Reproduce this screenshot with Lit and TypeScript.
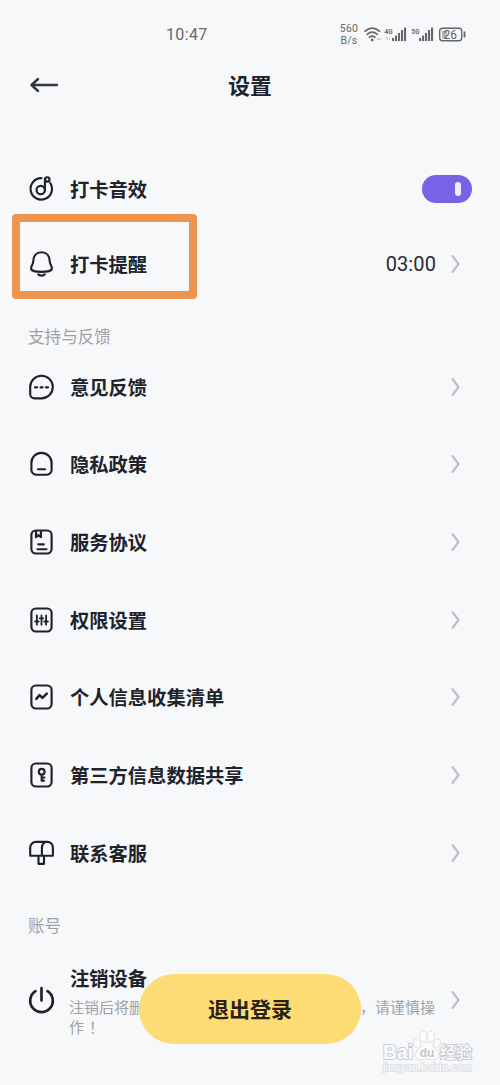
import { LitElement, html, css, svg, SVGTemplateResult } from "lit";
import { customElement, property, state } from "lit/decorators.js";

const icons: Record<string, SVGTemplateResult> = {
  music: svg`<path d="M14 3.2A10.7 10.7 0 1 0 22.7 8"/><circle cx="13.2" cy="15" r="4.2"/><path d="M17.4 15V3.8"/><circle cx="19.8" cy="4.4" r="2.2"/>`,
  bell: svg`<path d="M14 2.2C8.8 2.2 6.1 6 5.9 10.5C5.7 15 3.6 15.4 3.6 18.3C3.6 21.3 7.5 21.8 14 21.8S24.4 21.3 24.4 18.3C24.4 15.4 22.3 15 22.1 10.5C21.9 6 19.2 2.2 14 2.2Z"/><path d="M10.8 24.4Q14 26.9 17.2 24.4"/>`,
  feedback: svg`<path d="M14 2.7A11.3 11.3 0 1 1 14 25.3H7A4.3 4.3 0 0 1 2.7 21V14A11.3 11.3 0 0 1 14 2.7Z"/><path d="M7.5 14.3h2.1M13 14.3h2.1M18.5 14.3h2.1"/>`,
  privacy: svg`<path d="M3.9 13A10.1 10.1 0 0 1 24.1 13V20A4.7 4.7 0 0 1 19.4 24.7H8.6A4.7 4.7 0 0 1 3.9 20Z"/><path d="M10.5 19.2h7"/>`,
  agreement: svg`<rect x="3.9" y="2.5" width="20.2" height="23" rx="4.5"/><path d="M8.5 3v6.2l2.5-2 2.5 2V3M10.8 16.3h5.5M10 21.2h9"/>`,
  sliders: svg`<rect x="3.9" y="2.5" width="20.2" height="23" rx="4.5"/><path stroke-width="1.8" d="M9.4 9.3v9.4M14 9.3v9.4M18.6 9.3v9.4M7.6 15.5h3.6M12.2 12.3h3.6M16.8 15.5h3.6"/>`,
  chart: svg`<rect x="3.9" y="2.5" width="20.2" height="23" rx="4.5"/><path stroke-width="2.5" d="M8.8 15.8l3.3-3.6 2.8 2.7 4.4-4.2"/>`,
  key: svg`<rect x="3.9" y="2.5" width="20.2" height="23" rx="4.5"/><circle cx="14.2" cy="10.8" r="2.9"/><path d="M14.2 13.7v6M14.5 16.5h2.4M14.5 19.6h2"/>`,
  mailbox: svg`<path d="M8.5 2.8H19.8A5.6 5.6 0 0 1 25.4 8.5V16.7H2.7V8.5A5.8 5.8 0 0 1 8.5 2.8ZM14.4 16.5V8.3A5.5 5.5 0 0 1 19.8 2.8M11 17v7.8h5.5V17"/>`,
  power: svg`<path stroke-width="2.7" d="M8 5.2A11.3 11.3 0 1 0 20 5.2M14 2.2V14.5"/>`,
};

@customElement("settings-row")
class SettingsRow extends LitElement {
  @property() icon = "";
  @property() label = "";
  @property() value = "";
  @property({ type: Boolean }) toggle = false;
  @property({ type: Boolean }) marked = false;
  @state() private on = true;

  static styles = css`
    :host { display: flex; align-items: center; position: relative; padding: 0 39px 0 27px; height: 77.7px; box-sizing: border-box; }
    :host([compact]) { height: 75px; }
    :host([toggle]) { padding-right: 28px; }
    .icon { width: 29px; height: 28px; flex: none; fill: none; stroke: #20222b; stroke-width: 2.15; stroke-linecap: round; stroke-linejoin: round; }
    .body { flex: 1; margin-left: 14px; }
    .label { font-size: 19.3px; line-height: 28px; font-weight: 600; color: #20222c; white-space: nowrap; }
    .value { font: 20px/28px Roboto, sans-serif; color: #292b32; margin-right: 15px; letter-spacing: .1px; }
    .chevron { width: 10px; height: 20px; flex: none; fill: none; stroke: #bfc1c8; stroke-width: 2.3; stroke-linecap: round; stroke-linejoin: round; }
    .switch { width: 50px; height: 28px; padding: 0 11px; border: 0; border-radius: 14px; background: #7962e5; display: flex; align-items: center; justify-content: flex-end; box-sizing: border-box; }
    .switch.off { background: #c6c7ce; justify-content: flex-start; }
    .knob { width: 6px; height: 14px; border-radius: 3px; background: #f0edff; }
    .mark { position: absolute; left: 12px; top: -12px; width: 185px; height: 85px; border: 8px solid #ed944e; border-radius: 4px; box-sizing: border-box; pointer-events: none; }
  `;

  render() {
    return html`
      <svg class="icon" viewBox="0 0 28 28">${icons[this.icon]}</svg>
      <div class="body"><div class="label">${this.label}</div><slot></slot></div>
      ${this.value ? html`<span class="value">${this.value}</span>` : ""}
      ${this.toggle
        ? html`<button class=${this.on ? "switch" : "switch off"} @click=${() => (this.on = !this.on)}><span class="knob"></span></button>`
        : html`<svg class="chevron" viewBox="0 0 10 20"><path d="M1.7 2.2 7.5 10 1.7 17.8"/></svg>`}
      ${this.marked ? html`<div class="mark"></div>` : ""}
    `;
  }
}

@customElement("status-bar")
class StatusBar extends LitElement {
  static styles = css`
    :host { display: grid; grid-template-columns: 166px 1fr auto; align-items: center; height: 68px; padding-right: 33px; color: #66676b; font-family: Roboto, sans-serif; }
    .time { grid-column: 2; font-size: 16px; letter-spacing: .35px; }
    .right { display: flex; align-items: center; }
    .speed { font-size: 10.5px; line-height: 12px; text-align: center; width: 20px; letter-spacing: .2px; padding-top: 1px; }
    .signals { width: 108px; height: 22px; fill: none; stroke: #66676b; }
    .solid { fill: #66676b; stroke: none; }
    .faint { fill: #d5d6d8; stroke: none; }
    .gen { font-size: 8px; font-weight: 700; fill: #66676b; stroke: none; }
    .charge { font-size: 12px; fill: #5c5d61; stroke: none; }
  `;

  private bars(x: number) {
    return [3, 5.5, 8, 11, 13.5].map(
      (h, i) => svg`<rect class="solid" x=${x + i * 3} y=${18 - h} width="2.1" height=${h}/>`
    );
  }

  render() {
    return html`
      <span class="time">10:47</span>
      <div class="right">
        <div class="speed">560<br />B/s</div>
        <svg class="signals" viewBox="0 0 108 22">
          <g stroke-width="1.7" stroke-linecap="round">
            <path d="M6 8.2Q13.2 2 20.4 8.2M8.2 11.3Q13.2 7 18.2 11.3M10.4 14.3Q13.2 12 16 14.3"/>
          </g>
          <circle class="solid" cx="13.2" cy="17" r="1.4"/>
          <path class="faint" d="M18 15h4v2h-4zM27 14h2v3h-2zM30 14h1.5v3H30z"/>
          <text class="gen" x="25.5" y="10.6" textLength="8" lengthAdjust="spacingAndGlyphs">4G</text>
          ${this.bars(33)}
          <text class="gen" x="52.5" y="10.6" textLength="8" lengthAdjust="spacingAndGlyphs">5G</text>
          ${this.bars(60)}
          <rect x="80.7" y="5.3" width="22" height="12.4" rx="2.7" stroke-width="1.4"/>
          <rect x="83" y="7.5" width="5" height="8" fill="#b3b4b7" stroke="none"/>
          <text class="charge" x="84.6" y="15.8">26</text>
          <path d="M105.5 8.5v6" stroke-width="1.8"/>
        </svg>
      </div>
    `;
  }
}

@customElement("app-root")
class AppRoot extends LitElement {
  static styles = css`
    :host { display: block; position: relative; width: 500px; height: 1085px; overflow: hidden; background: #f7f8fa; font-family: "Noto Sans CJK SC", sans-serif; }
    .header { display: grid; grid-template-columns: 1fr auto 1fr; align-items: center; height: 33px; padding: 0 29px; }
    .back { width: 30px; height: 18px; fill: none; stroke: #353844; stroke-width: 2.4; stroke-linecap: round; stroke-linejoin: round; }
    .title { margin: -1px 0 0; font-size: 21.8px; line-height: 33px; font-weight: 700; color: #20222c; }
    .list { padding-top: 50px; }
    .section { box-sizing: border-box; height: 46.8px; padding: 25px 28px 0; font-size: 16.6px; line-height: 20px; color: #a0a1a6; }
    .section.account { height: 70px; padding-top: 23.6px; }
    .note { font-size: 15px; line-height: 20px; color: #a0a1a6; width: 366px; margin: 5px 0 0 -1px; }
    .line { display: flex; justify-content: space-between; }
    .bang { margin-left: 5px; }
    .logout { position: absolute; left: 139px; top: 974px; width: 222px; height: 70px; border: 0; padding: 0 0 2px; border-radius: 35px; background: #fddb75; color: #292116; font: 700 21px "Noto Sans CJK SC", sans-serif; }
    .watermark { position: absolute; left: 380px; top: 1028px; width: 96px; height: 50px; fill: #fcfcfd; stroke: #c9cbd0; stroke-width: 1; paint-order: stroke; }
    .brand { font: 700 21px "Liberation Sans", sans-serif; stroke-width: 2; }
    .cn { font: 500 16px "Noto Sans CJK SC", sans-serif; stroke-width: 2; }
    .du { font: 700 12px "Liberation Sans", sans-serif; fill: #c3c5ca; stroke: none; }
    .site { font: 11px "Liberation Sans", sans-serif; stroke: #dcdde1; stroke-width: 1.6; }
  `;

  render() {
    const support = [
      ["feedback", "意见反馈"],
      ["privacy", "隐私政策"],
      ["agreement", "服务协议"],
      ["sliders", "权限设置"],
      ["chart", "个人信息收集清单"],
      ["key", "第三方信息数据共享"],
      ["mailbox", "联系客服"],
    ];
    return html`
      <status-bar></status-bar>
      <header class="header">
        <svg class="back" viewBox="0 0 30 18"><path d="M28 9H2.5M9 3 2.5 9 9 15"/></svg>
        <h1 class="title">设置</h1>
      </header>
      <main class="list">
        <settings-row compact toggle icon="music" label="打卡音效"></settings-row>
        <settings-row compact marked icon="bell" label="打卡提醒" value="03:00"></settings-row>
        <div class="section">支持与反馈</div>
        ${support.map(([icon, label]) => html`<settings-row icon=${icon} label=${label}></settings-row>`)}
        <div class="section account">账号</div>
        <settings-row icon="power" label="注销设备">
          <div class="note">
            <div class="line"><span>注销后将删</span><span>，请谨慎操</span></div>
            <div>作<span class="bang">！</span></div>
          </div>
        </settings-row>
      </main>
      <button class="logout">退出登录</button>
      <svg class="watermark" viewBox="0 0 96 50">
        <text class="brand" x="3" y="31" textLength="30" lengthAdjust="spacingAndGlyphs">Bai</text>
        <ellipse cx="37" cy="15.5" rx="3.2" ry="4.2" transform="rotate(-20 37 15.5)"/>
        <ellipse cx="43.3" cy="8.5" rx="3.4" ry="4.7"/>
        <ellipse cx="51" cy="8.5" rx="3.4" ry="4.7"/>
        <ellipse cx="57" cy="15.5" rx="3.2" ry="4.2" transform="rotate(20 57 15.5)"/>
        <path d="M47 14.5C51 14.5 52 19 55.5 21.5C60 25 58.5 31.5 53.5 31.5C50 31.5 50 30.5 47 30.5S43 31.5 40 31.5C35.5 31.5 34.5 25 38.5 21.5C42 19 43 14.5 47 14.5Z"/>
        <text class="du" x="39.7" y="28.5">du</text>
        <text class="cn" x="60" y="30">经验</text>
        <text class="site" x="3" y="43" textLength="89">jingyan.baidu.com</text>
      </svg>
    `;
  }
}
